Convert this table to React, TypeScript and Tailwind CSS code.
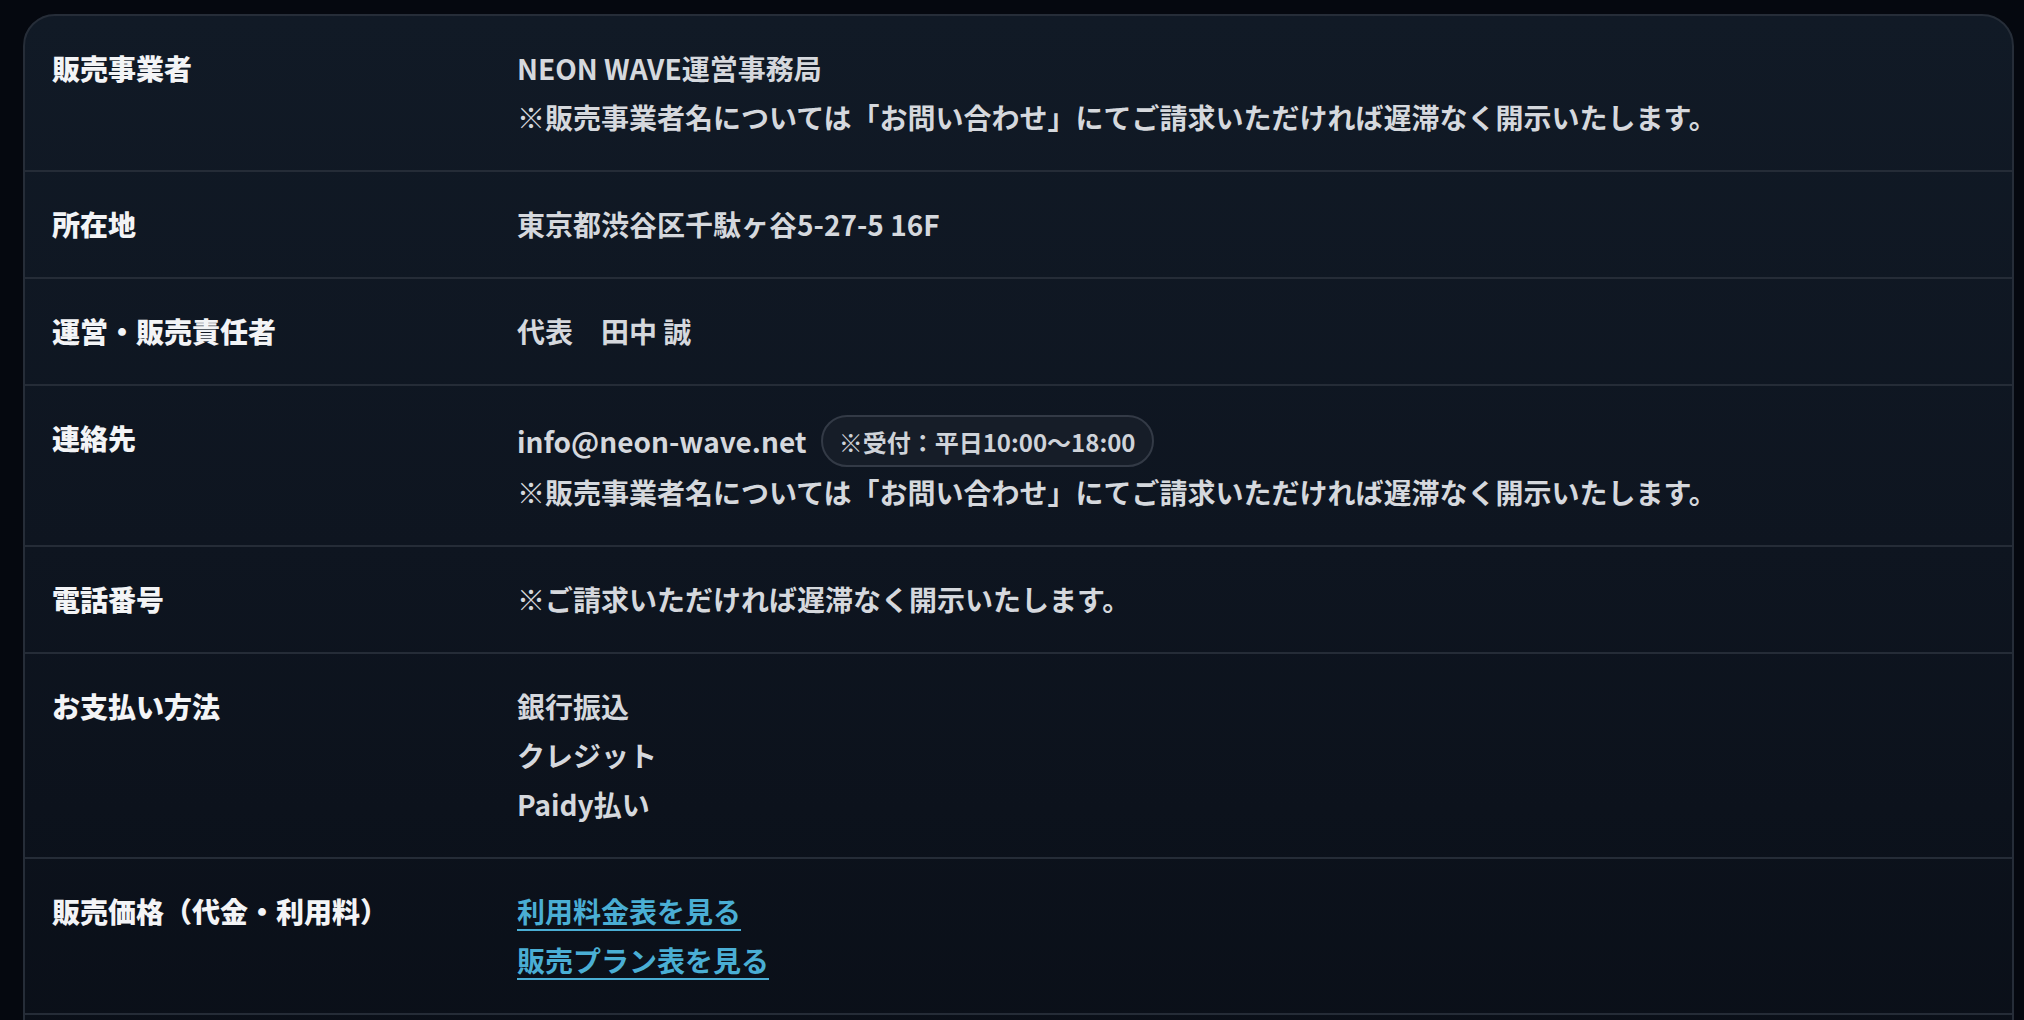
import React from "react";

type Row = {
  label: string;
  lines: React.ReactNode[];
};

const font = { fontFamily: '"Noto Sans CJK JP", "Noto Sans", sans-serif' };

const notice =
  "※販売事業者名については「お問い合わせ」にてご請求いただければ遅滞なく開示いたします。";

const rows: Row[] = [
  { label: "販売事業者", lines: ["NEON WAVE運営事務局", notice] },
  { label: "所在地", lines: ["東京都渋谷区千駄ヶ谷5-27-5 16F"] },
  { label: "運営・販売責任者", lines: ["代表　田中 誠"] },
  {
    label: "連絡先",
    lines: [
      <div key="mail" className="flex items-center gap-[14px] py-[1px]">
        <span>info@neon-wave.net</span>
        <span className="inline-flex h-[52px] items-center rounded-full border-2 border-[#333a46] bg-[#161d28] px-[16px] text-[24px] text-[#cfd3d9]">
          ※受付：平日10:00〜18:00
        </span>
      </div>,
      notice,
    ],
  },
  { label: "電話番号", lines: ["※ご請求いただければ遅滞なく開示いたします。"] },
  { label: "お支払い方法", lines: ["銀行振込", "クレジット", "Paidy払い"] },
  {
    label: "販売価格（代金・利用料）",
    lines: [
      <a key="a" href="#" className="text-[#4aaed4] underline decoration-2 underline-offset-[6px]">
        利用料金表を見る
      </a>,
      <a key="b" href="#" className="text-[#4aaed4] underline decoration-2 underline-offset-[6px]">
        販売プラン表を見る
      </a>,
    ],
  },
];

export default function App() {
  return (
    <div className="min-h-screen overflow-hidden bg-[#05080f] pt-[14px]" style={font}>
      <div className="ml-[23px] w-[1991px] overflow-hidden rounded-[32px] border-2 border-[#262d38] bg-gradient-to-b from-[#111a26] via-[#0e1520] to-[#0a0f18]">
        {rows.map((row) => (
          <div
            key={row.label}
            className="grid grid-cols-[465px_1fr] border-b-2 border-[#252c37] px-[27px] py-[28px] text-[28px] leading-[49px]"
          >
            <div className="font-black text-[#f3f4f6]">{row.label}</div>
            <div className="flex flex-col font-bold text-[#d5d8dd]">
              {row.lines.map((line, i) => (
                <div key={i}>{line}</div>
              ))}
            </div>
          </div>
        ))}
        <div className="h-[60px]" />
      </div>
    </div>
  );
}
